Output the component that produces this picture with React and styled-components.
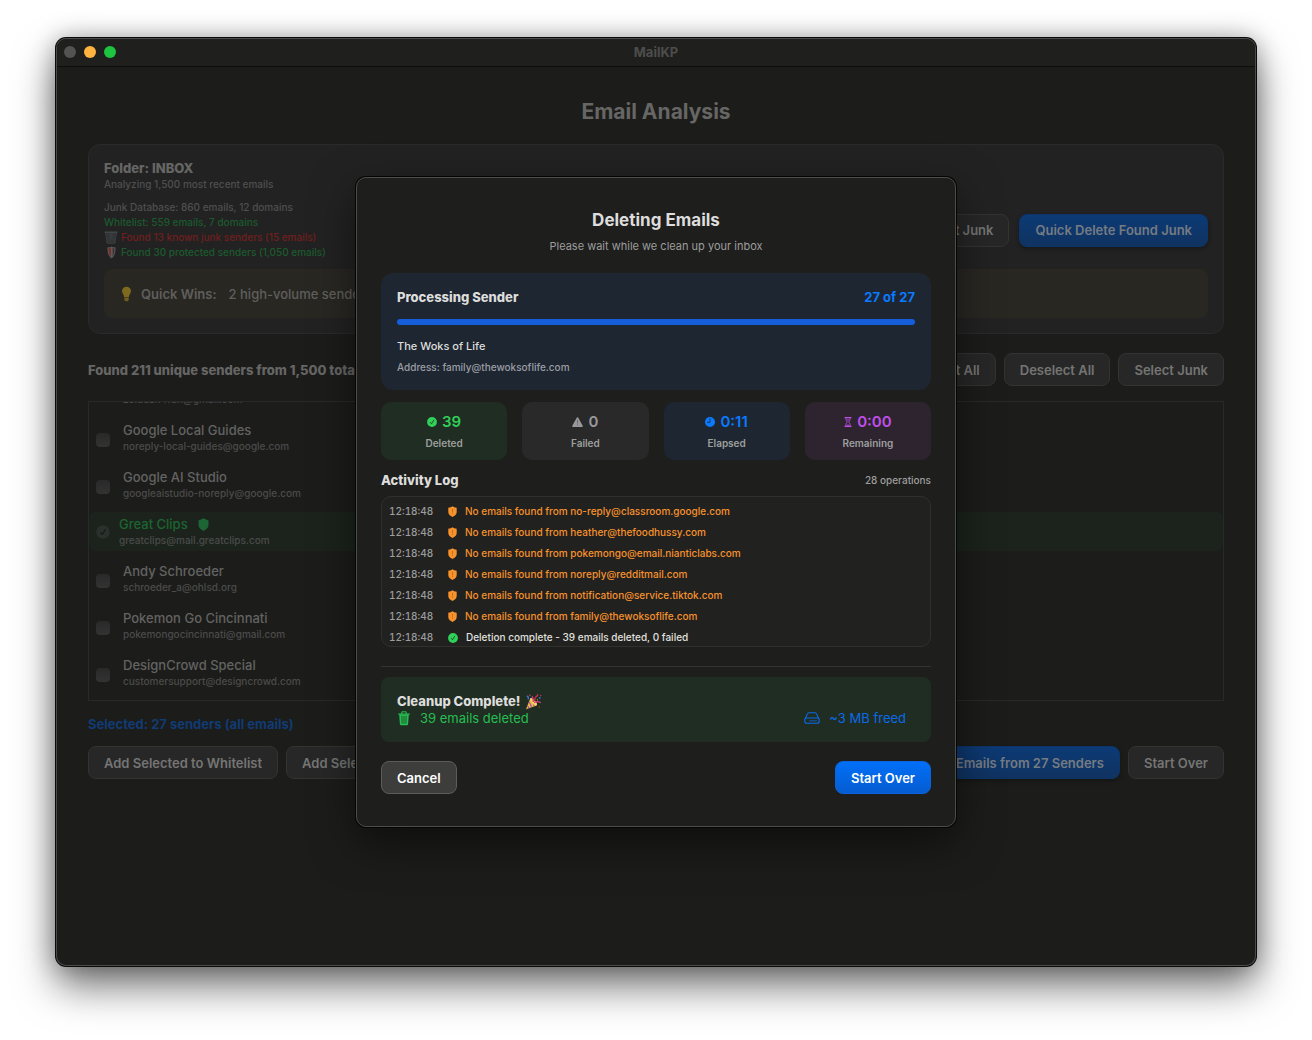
import React from "react";
import styled, { createGlobalStyle } from "styled-components";

const GlobalStyle = createGlobalStyle`
  * {
    box-sizing: border-box;
  }

  body {
    margin: 0;
    background: #ffffff;
    font-family: Inter, "Liberation Sans", sans-serif;
    font-size: 13px;
    line-height: 16px;
  }

  h1, h2, h3, p, ul {
    margin: 0;
    padding: 0;
    list-style: none;
  }

  svg {
    display: block;
    flex: none;
  }
`;

// window

const Page = styled.div`
  min-height: 100vh;
  padding: 38px 56px 74px;
  display: flex;
`;

const Window = styled.div`
  position: relative;
  flex: 1;
  min-width: 0;
  display: flex;
  flex-direction: column;
  background: #1c1c1a;
  border-radius: 10px;
  box-shadow: inset 0 0 0 1px #4b4b4a, 0 0 0 1px #0a0a0a,
    0 20px 40px rgba(0, 0, 0, 0.55), 0 0 24px rgba(0, 0, 0, 0.3);
`;

const TitleBar = styled.header`
  display: grid;
  grid-template-columns: 1fr auto 1fr;
  align-items: center;
  height: 28px;
  margin: 1px 1px 0;
  padding: 0 7px 2px;
  border-bottom: 1px solid #0c0c0c;
  border-radius: 9px 9px 0 0;
  background: #1f1f1e;
  color: #4d4d4c;
  font-weight: 700;
`;

const Lights = styled.div`
  display: flex;
  gap: 8px;
`;

const Light = styled.button`
  width: 12px;
  height: 12px;
  padding: 0;
  border: 0;
  border-radius: 50%;
  background: ${(p) => p.$color};
`;

const Content = styled.main`
  display: flex;
  flex-direction: column;
  padding: 31px 32px;
  color: #666665;
`;

const PageTitle = styled.h1`
  font-size: 21px;
  line-height: 28px;
  font-weight: 700;
  text-align: center;
`;

// behind the sheet

const Card = styled.section`
  margin-top: 18px;
  padding: 15px;
  border: 1px solid #2a2a2a;
  border-radius: 12px;
  background: #222222;
`;

const Heading = styled.h2`
  font-size: 13px;
  line-height: 16px;
  font-weight: 800;
`;

const Small = styled.p`
  display: flex;
  align-items: center;
  gap: 3px;
  font-size: 10px;
  line-height: 15px;
  font-weight: 500;
  color: ${(p) => p.$color || "#4f4f4f"};
`;

const Row = styled.div`
  display: flex;
  align-items: center;
  justify-content: space-between;
  margin-top: ${(p) => p.$top || 0}px;
`;

const Group = styled.div`
  display: flex;
  gap: ${(p) => p.$gap || 8}px;
`;

const Button = styled.button`
  height: 33px;
  padding: 0 15px;
  border: 1px solid #333332;
  border-radius: 8px;
  background: #272727;
  color: #757574;
  font: 600 13px/16px Inter, "Liberation Sans", sans-serif;
  white-space: nowrap;
`;

const BlueButton = styled(Button)`
  border-color: #0d3569;
  background: linear-gradient(#0c3a75, #103361);
  box-shadow: 0 2px 4px rgba(0, 0, 0, 0.3);
  color: #757b83;
`;

const QuickWins = styled.div`
  display: flex;
  align-items: center;
  gap: 8px;
  margin-top: 9px;
  padding: 16px;
  height: 49px;
  border-radius: 8px;
  background: #292722;
  color: #5f5f5d;
  font-weight: 500;

  strong {
    margin-right: 4px;
    font-weight: 600;
  }
`;

// the list is scrolled to its end, so the top row is cut off
const SenderList = styled.ul`
  display: flex;
  flex-direction: column;
  justify-content: flex-end;
  gap: 8px;
  height: 300px;
  margin-top: 15px !important;
  padding-bottom: 8px !important;
  overflow: hidden;
  border: 1px solid #29292b;
`;

const Sender = styled.li`
  display: flex;
  align-items: center;
  flex: none;
  gap: ${(p) => (p.$safe ? 9 : 13)}px;
  padding: 4px 7px 3px;
  border-radius: 6px;
  background: ${(p) => (p.$safe ? "#1b231c" : "transparent")};
`;

const SenderLabel = styled.label`
  display: block;
  font-weight: 500;
  color: ${(p) => (p.$safe ? "#1b6631" : "#636362")};
`;

const SenderName = styled.span`
  display: flex;
  align-items: center;
  gap: 10px;
`;

const SenderEmail = styled.span`
  display: block;
  padding-top: 1px;
  color: #4b4b4b;
  font-size: 10px;
  line-height: 15px;
  font-weight: 500;
`;

const ScrolledSender = styled.li`
  flex: none;
  padding: 4px 34px 3px;
`;

const Checkbox = styled.input`
  appearance: none;
  flex: none;
  width: 14px;
  height: 14px;
  margin: 3px 0 0;
  border-radius: 4px;
  background: linear-gradient(#292929, #333333);
`;

const Selected = styled.p`
  padding: 15px 0 14px !important;
  color: #103b73;
  font-weight: 700;
`;

// sheet

const Overlay = styled.div`
  position: absolute;
  inset: 0;
  display: grid;
  place-items: center;
`;

const Dialog = styled.section`
  width: 100%;
  max-width: 600px;
  padding: 31px 24px 32px;
  border: 1px solid #4d4d4c;
  border-radius: 10px;
  background: #1e1e1d;
  box-shadow: 0 0 0 1px #050505, 0 16px 44px rgba(0, 0, 0, 0.5);
  color: #dddddc;
`;

const DialogTitle = styled.h2`
  font-size: 17px;
  line-height: 22px;
  font-weight: 700;
  text-align: center;
`;

const Subtitle = styled.p`
  margin-top: 7px;
  font-size: 11px;
  line-height: 16px;
  text-align: center;
  color: #9d9d9c;
`;

const Processing = styled.div`
  margin-top: 19px;
  padding: 16px 16px 15px;
  border-radius: 12px;
  background: #1e2631;

  b {
    color: #0a7aff;
    font-weight: 700;
  }
`;

const Progress = styled.progress`
  appearance: none;
  display: block;
  width: 100%;
  height: 6px;
  margin: 14px 0 13px;
  border: 0;
  border-radius: 3px;
  overflow: hidden;

  &::-webkit-progress-bar {
    background: #2b3440;
  }

  &::-webkit-progress-value {
    background: #155fdc;
  }
`;

const CurrentName = styled.p`
  font-size: 11px;
  line-height: 16px;
  font-weight: 500;
`;

const Address = styled.p`
  margin-top: 6px;
  font-size: 10px;
  line-height: 15px;
  font-weight: 500;
  color: #9a9ea4;
`;

const Stats = styled.div`
  display: grid;
  grid-template-columns: repeat(4, 1fr);
  gap: 15px;
  margin-top: 12px;
`;

const Stat = styled.div`
  display: flex;
  flex-direction: column;
  align-items: center;
  gap: 3px;
  padding: 9px 8px;
  border-radius: 10px;
  background: ${(p) => p.$bg};
  color: #9d9f9d;
  font-size: 10px;
  line-height: 16px;
  font-weight: 600;

  strong {
    display: flex;
    align-items: center;
    gap: 5px;
    color: ${(p) => p.$color};
    font-size: 15px;
    line-height: 21px;
    font-weight: 600;
  }
`;

const Operations = styled.span`
  color: #9d9d9c;
  font-size: 10px;
  font-weight: 500;
`;

const Log = styled.ul`
  height: 151px;
  margin-top: 8px !important;
  padding: 7px !important;
  overflow: hidden;
  border: 1px solid #30302f;
  border-radius: 10px;
  background: #212120;
`;

const LogRow = styled.li`
  display: flex;
  align-items: center;
  height: 15px;
  margin-bottom: 6px;
  color: ${(p) => (p.$done ? "#e0e0df" : "#f7922c")};
  font-size: 10px;
  line-height: 15px;
  font-weight: 500;

  time {
    width: 59px;
    color: #9d9d9c;
    font-variant-numeric: tabular-nums;
  }

  svg {
    margin-right: 8px;
  }
`;

const Divider = styled.hr`
  height: 1px;
  margin: 19px 0 10px;
  border: 0;
  background: #333332;
`;

const Complete = styled.div`
  padding: 16px;
  border-radius: 8px;
  background: #202d23;

  h3 {
    display: flex;
    align-items: center;
    gap: 5px;
    font-size: 13px;
    line-height: 17px;
    font-weight: 800;
  }
`;

const Result = styled.span`
  display: flex;
  align-items: center;
  gap: 9px;
  padding-right: 9px;
  color: ${(p) => p.$color};
`;

const CancelButton = styled(Button)`
  border-color: #5c5c5b;
  background: #3d3d3c;
  color: #ffffff;
`;

const StartButton = styled(Button)`
  border-color: #0a63dc;
  background: linear-gradient(#0070f8, #065cd0);
  color: #ffffff;
`;

// icons

const CheckCircle = ({ size = 10, fill = "#30d158", mark = "#1f3023" }) => (
  <svg width={size} height={size} viewBox="0 0 10 10">
    <circle cx="5" cy="5" r="4.9" fill={fill} />
    <path d="M3.3 5.4 4.5 6.8 6.7 3.2" fill="none" stroke={mark} strokeWidth="0.8" strokeLinecap="round" strokeLinejoin="round" />
  </svg>
);

const Shield = ({ width = 9, fill = "#f7922c", mark }) => (
  <svg width={width} height={Math.round((width * 11) / 9)} viewBox="0 0 9 11">
    <path d="M4.5 0.2C5.5 1 7 1.4 8.1 1.6 8.5 1.7 8.7 1.9 8.7 2.3V6C8.7 8.4 6.8 9.9 4.5 10.9 2.2 9.9 0.3 8.4 0.3 6V2.3C0.3 1.9 0.5 1.7 0.9 1.6 2 1.4 3.5 1 4.5 0.2Z" fill={fill} />
    {mark && <path d="M4.5 3.2V5.8M4.5 7.2V7.6" stroke={mark} strokeWidth="0.9" strokeLinecap="round" />}
  </svg>
);

const Warning = () => (
  <svg width="11" height="10" viewBox="0 0 11 10">
    <path d="M5.5 0.9 10.1 9.2H0.9Z" fill="#98989d" stroke="#98989d" strokeWidth="1.4" strokeLinejoin="round" />
    <path d="M5.5 3.4V6.2M5.5 7.7V8" stroke="#606062" strokeWidth="0.8" strokeLinecap="round" />
  </svg>
);

const Clock = () => (
  <svg width="10" height="10" viewBox="0 0 10 10">
    <circle cx="5" cy="5" r="5" fill="#0a7aff" />
    <path d="M5 1.8V5.3H2.4" fill="none" stroke="#1e2631" strokeWidth="0.8" strokeLinecap="round" />
  </svg>
);

const Hourglass = () => (
  <svg width="8" height="10" viewBox="0 0 8 10" fill="none" stroke="#bf4fe8">
    <path d="M1 0.6H7M1 9.4H7" strokeWidth="1.1" strokeLinecap="round" />
    <path d="M1.8 0.8C1.8 3 2.4 3.9 3.4 5 2.4 6.1 1.8 7 1.8 9.2M6.2 0.8C6.2 3 5.6 3.9 4.6 5 5.6 6.1 6.2 7 6.2 9.2" strokeWidth="0.9" />
    <path d="M2.8 2.6H5.2L4 4ZM2.5 8.8 4 7.3 5.5 8.8Z" fill="#bf4fe8" stroke="none" />
  </svg>
);

const Trash = () => (
  <svg width="14" height="15" viewBox="0 0 14 15">
    <path d="M1.6 3.1H12.4M4.8 2.8V1.6C4.8 1.1 5.1 0.8 5.6 0.8H8.4C8.9 0.8 9.2 1.1 9.2 1.6V2.8" fill="none" stroke="#26be50" strokeWidth="1.1" strokeLinecap="round" />
    <path d="M2.2 3.4H11.8L11.1 12.9C11 13.8 10.5 14.3 9.7 14.3H4.3C3.5 14.3 3 13.8 2.9 12.9Z" fill="#26be50" />
    <path d="M4.9 5.2 5.1 12.3M7 5.2V12.3M9.1 5.2 8.9 12.3" stroke="#202d23" strokeWidth="0.7" strokeLinecap="round" />
  </svg>
);

const Drive = () => (
  <svg width="16" height="12" viewBox="0 0 16 12" fill="none" stroke="#0a6be8">
    <rect x="0.8" y="6" width="14.4" height="5.3" rx="2" strokeWidth="1.1" />
    <path d="M1.1 7 3.4 1.9C3.7 1.1 4.2 0.7 5 0.7H11C11.8 0.7 12.3 1.1 12.6 1.9L14.9 7" strokeWidth="1.1" />
    <path d="M5.5 8.7H13" strokeWidth="1.4" strokeDasharray="1.2 0.5" opacity="0.7" />
  </svg>
);

const Basket = () => (
  <svg width="14" height="13" viewBox="0 0 14 13">
    <path d="M1.5 1.5H12.5L11 12.3H3Z" fill="#303234" stroke="#3a3c3f" />
    <path d="M3.5 3 10.5 11M10.5 3 3.5 11M7 2V12M5 2 10.5 8M9 2 3.5 8" stroke="#404346" strokeWidth="0.5" />
    <path d="M1 1.2H13" stroke="#46494c" strokeWidth="1.2" strokeLinecap="round" />
  </svg>
);

const Guard = () => (
  <svg width="14" height="13" viewBox="0 0 14 13">
    <path d="M7.5 0.5C8.7 1.2 10 1.4 11.5 1.4 11.7 6.5 10.7 10.3 7.5 12.5 4.3 10.3 3.3 6.5 3.5 1.4 5 1.4 6.3 1.2 7.5 0.5Z" fill="#5a5a5a" />
    <path d="M7 1.6V11.2C5.2 9.4 4.4 6.6 4.4 2.2Z" fill="#78302a" />
    <path d="M8.6 2V10.2C10 8.3 10.5 5.5 10.5 2.4Z" fill="#3c3331" />
  </svg>
);

const Bulb = () => (
  <svg width="13" height="16" viewBox="0 0 13 16">
    <path d="M6.5 0.8C9 0.8 11 2.6 11 5 11 7.4 9 8.5 8.8 11.3H4.2C4 8.5 2 7.4 2 5 2 2.6 4 0.8 6.5 0.8Z" fill="#7e6a1f" />
    <path d="M4.3 11.8H8.7V13.7C8.2 14.9 7.5 15.2 6.5 15.2S4.8 14.9 4.3 13.7Z" fill="#6f5e20" />
  </svg>
);

const Party = () => (
  <svg width="17" height="16" viewBox="0 0 17 16">
    <path d="M1 15.2 5.2 4.4C8.4 5.4 10.9 8.3 11.6 11.4Z" fill="#f4b73c" />
    <path d="M3.9 7.8C5.1 9.6 6.4 11.6 6.5 13.2M2.4 11.5 4.1 14.1M5.5 5C7.5 7 8.9 9.6 9.3 12.1" fill="none" stroke="#8b4fc0" strokeWidth="1.1" />
    <ellipse cx="8.5" cy="7.8" rx="4.7" ry="1.9" transform="rotate(48 8.5 7.8)" fill="#f8d26b" />
    <path d="M8 7.5C8.8 5.5 8 3.8 7.2 2.6M9.5 8.5C11 7.6 13.5 7.3 15.4 8.6" fill="none" stroke="#d23d7b" strokeWidth="1.2" strokeLinecap="round" />
    <path d="M9 7C10.5 5.6 9.4 3.5 11.5 2.4 12.5 1.9 12.8 1.2 12.6 0.7" fill="none" stroke="#c73046" strokeWidth="1.3" strokeLinecap="round" />
    <path d="M2.2 2.2C3.4 2.7 3.5 4 3.2 5" fill="none" stroke="#3f76d9" strokeWidth="1.3" strokeLinecap="round" />
    <circle cx="14.8" cy="3.8" r="0.9" fill="#3f76d9" />
    <circle cx="4.9" cy="1.3" r="0.7" fill="#d23d7b" />
    <circle cx="15.8" cy="1.6" r="0.7" fill="#d23d7b" />
    <circle cx="14.3" cy="13" r="0.8" fill="#96452a" />
    <circle cx="12.5" cy="5.8" r="0.6" fill="#f4b73c" />
  </svg>
);

const senders = [
  { name: "Google Local Guides", email: "noreply-local-guides@google.com" },
  { name: "Google AI Studio", email: "googleaistudio-noreply@google.com" },
  { name: "Great Clips", email: "greatclips@mail.greatclips.com", safe: true },
  { name: "Andy Schroeder", email: "schroeder_a@ohlsd.org" },
  { name: "Pokemon Go Cincinnati", email: "pokemongocincinnati@gmail.com" },
  { name: "DesignCrowd Special", email: "customersupport@designcrowd.com" },
];

const emptySenders = [
  "no-reply@classroom.google.com",
  "heather@thefoodhussy.com",
  "pokemongo@email.nianticlabs.com",
  "noreply@redditmail.com",
  "notification@service.tiktok.com",
  "family@thewoksoflife.com",
];

const SenderRow = ({ name, email, safe }) => (
  <Sender $safe={safe}>
    {safe ? (
      <CheckCircle size={14} fill="#2a302b" mark="#151a16" />
    ) : (
      <Checkbox type="checkbox" id={email} />
    )}
    <SenderLabel as={safe ? "div" : "label"} $safe={safe} htmlFor={safe ? undefined : email}>
      <SenderName>
        {name}
        {safe && <Shield width={11} fill="#1d6534" />}
      </SenderName>
      <SenderEmail>{email}</SenderEmail>
    </SenderLabel>
  </Sender>
);

const Analysis = () => (
  <Content>
    <PageTitle>Email Analysis</PageTitle>
    <Card>
      <Heading>Folder: INBOX</Heading>
      <Row $top={1}>
        <Small>Analyzing 1,500 most recent emails</Small>
      </Row>
      <Row $top={8}>
        <div>
          <Small>Junk Database: 860 emails, 12 domains</Small>
          <Small $color="#1b5a2e">Whitelist: 559 emails, 7 domains</Small>
          <Small $color="#701f1e"><Basket />Found 13 known junk senders (15 emails)</Small>
          <Small $color="#1b5a2e"><Guard />Found 30 protected senders (1,050 emails)</Small>
        </div>
        <Group $gap={10}>
          <Button>Edit Junk</Button>
          <BlueButton>Quick Delete Found Junk</BlueButton>
        </Group>
      </Row>
      <QuickWins>
        <Bulb />
        <strong>Quick Wins:</strong>
        2 high-volume senders
      </QuickWins>
    </Card>

    <Row $top={19}>
      <Heading>Found 211 unique senders from 1,500 total emails</Heading>
      <Group>
        <Button>Select All</Button>
        <Button>Deselect All</Button>
        <Button>Select Junk</Button>
      </Group>
    </Row>
    <SenderList>
      <ScrolledSender>
        <SenderEmail>zoldush4fun@gmail.com</SenderEmail>
      </ScrolledSender>
      {senders.map((s) => (
        <SenderRow key={s.email} {...s} />
      ))}
    </SenderList>

    <Selected>Selected: 27 senders (all emails)</Selected>
    <Row>
      <Group>
        <Button>Add Selected to Whitelist</Button>
        <Button>Add Selected to Junk</Button>
      </Group>
      <Group>
        <BlueButton>Delete Emails from 27 Senders</BlueButton>
        <Button>Start Over</Button>
      </Group>
    </Row>
  </Content>
);

const DeleteDialog = () => (
  <Overlay>
    <Dialog role="dialog" aria-labelledby="dialog-title">
      <DialogTitle id="dialog-title">Deleting Emails</DialogTitle>
      <Subtitle>Please wait while we clean up your inbox</Subtitle>

      <Processing>
        <Row>
          <Heading as="h3">Processing Sender</Heading>
          <b>27 of 27</b>
        </Row>
        <Progress value={27} max={27} aria-label="Senders processed" />
        <CurrentName>The Woks of Life</CurrentName>
        <Address>Address: family@thewoksoflife.com</Address>
      </Processing>

      <Stats>
        <Stat $bg="#202d23" $color="#30d158"><strong><CheckCircle />39</strong>Deleted</Stat>
        <Stat $bg="#292929" $color="#98989d"><strong><Warning />0</strong>Failed</Stat>
        <Stat $bg="#1e2631" $color="#0a7aff"><strong><Clock />0:11</strong>Elapsed</Stat>
        <Stat $bg="#2e2430" $color="#bf4fe8"><strong><Hourglass />0:00</strong>Remaining</Stat>
      </Stats>

      <Row $top={12}>
        <Heading as="h3">Activity Log</Heading>
        <Operations>28 operations</Operations>
      </Row>
      <Log>
        {emptySenders.map((email) => (
          <LogRow key={email}>
            <time>12:18:48</time>
            <Shield mark="#b86c20" />
            No emails found from {email}
          </LogRow>
        ))}
        <LogRow $done>
          <time>12:18:48</time>
          <CheckCircle />
          Deletion complete - 39 emails deleted, 0 failed
        </LogRow>
      </Log>

      <Divider />
      <Complete>
        <h3>Cleanup Complete! <Party /></h3>
        <Row>
          <Result $color="#26be50"><Trash />39 emails deleted</Result>
          <Result $color="#0a6be8"><Drive />~3 MB freed</Result>
        </Row>
      </Complete>

      <Row $top={19}>
        <CancelButton>Cancel</CancelButton>
        <StartButton>Start Over</StartButton>
      </Row>
    </Dialog>
  </Overlay>
);

const App = () => (
  <Page>
    <GlobalStyle />
    <Window>
      <TitleBar>
        <Lights>
          <Light $color="#535352" aria-label="Close" />
          <Light $color="#ffb340" aria-label="Minimize" />
          <Light $color="#1dc440" aria-label="Zoom" />
        </Lights>
        MailKP
      </TitleBar>
      <Analysis />
      <DeleteDialog />
    </Window>
  </Page>
);

export default App;
